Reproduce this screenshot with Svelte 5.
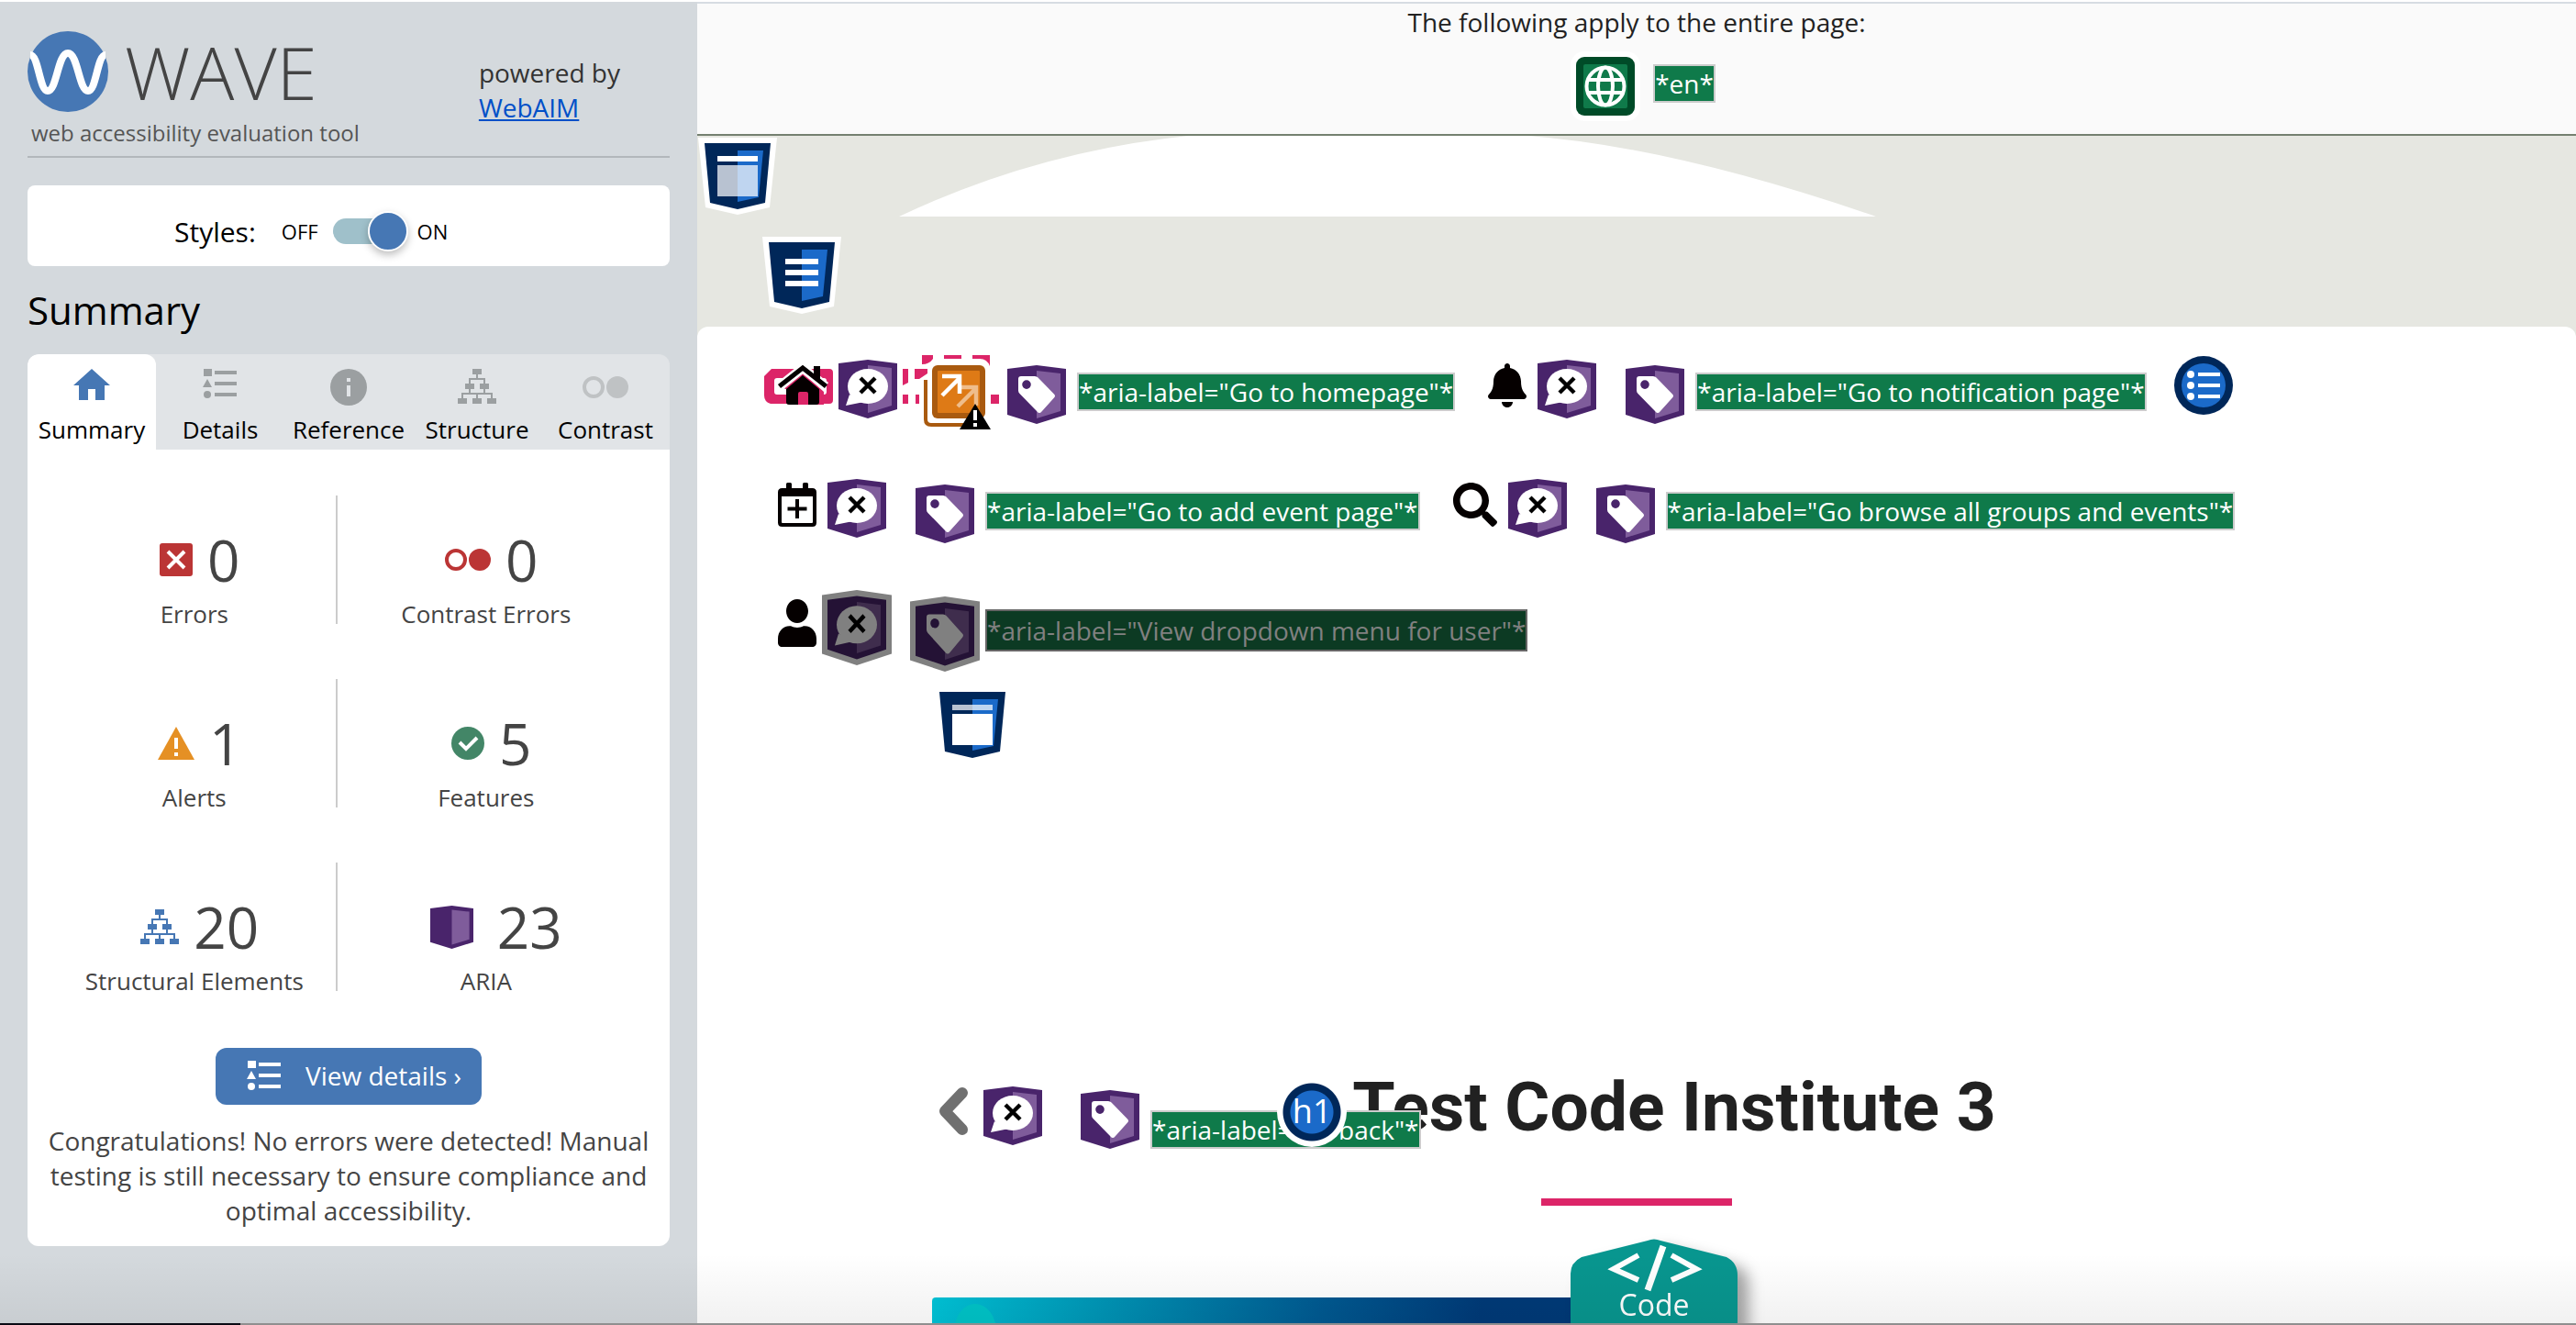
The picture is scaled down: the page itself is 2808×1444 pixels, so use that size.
<script>
  let stylesOn = $state(true);
  let active = $state('Summary');

  const tabs = ['Summary', 'Details', 'Reference', 'Structure', 'Contrast'];
  const stats = [
    { icon: 'error', count: 0, label: 'Errors' },
    { icon: 'low-contrast', count: 0, label: 'Contrast Errors' },
    { icon: 'alert', count: 1, label: 'Alerts' },
    { icon: 'feature', count: 5, label: 'Features' },
    { icon: 'elements', count: 20, label: 'Structural Elements' },
    { icon: 'roles', count: 23, label: 'ARIA' }
  ];
</script>

{#snippet structureIcon()}
  <svg width="42" height="38" viewBox="0 0 42 38" fill="currentColor" aria-hidden="true">
    <path d="M16 0h10v6H16zM8 16h10v6H8zM24 16h10v6H24zM0 32h10v6H0zM16 32h10v6H16zM32 32h10v6H32z" />
    <path d="M21 6v5M13 16v-5h16v5M13 22v5M29 22v5M5 32v-5h32v5M21 27v5" fill="none" stroke="currentColor" stroke-width="2" />
  </svg>
{/snippet}

{#snippet detailsIcon()}
  <svg width="38" height="32" viewBox="0 0 38 32" fill="currentColor" aria-hidden="true">
    <path d="M1 0h9v8H1zM13 2h24v4H13zM13 14h24v4H13zM13 26h24v4H13zM5 11l5 9H0z" />
    <circle cx="5" cy="28" r="4" />
  </svg>
{/snippet}

{#snippet contrastIcon()}
  <svg width="50" height="24" viewBox="0 0 50 24" fill="currentColor" aria-hidden="true">
    <circle cx="12" cy="12" r="10" fill="none" stroke="currentColor" stroke-width="4" />
    <circle cx="38" cy="12" r="12" />
  </svg>
{/snippet}

{#snippet ariaShape(kind)}
  <path d="M0 4 32 0 64 4V54L32 64 0 54Z" class="aria-dark" />
  <path d="M32 6 58 9V50L32 58Z" class="aria-light" />
  {#if kind === 'speech'}
    <ellipse cx="32" cy="29" rx="22" ry="19" class="aria-mark" />
    <path d="M12 38 8 50 28 46Z" class="aria-mark" />
    <path d="M24 20 40 36M40 20 24 36" stroke="#000" stroke-width="4.4" />
  {:else if kind === 'tag'}
    <path fill-rule="evenodd" class="aria-mark"
      d="M15 12h15q2 0 3.500 1.500L51 31.500q2 2 0 4L37.500 50.500q-2.500 3-5 0L13.500 31Q12 29.500 12 27.500V15q0-3 3-3ZM21 16.300a4.800 4.800 0 1 0 0 9.600 4.800 4.800 0 0 0 0-9.600Z" />
  {/if}
{/snippet}

{#snippet aria(kind, dim = false)}
  {#if dim}
    <svg class="aria {kind} dim" viewBox="-6 -6 76 76" preserveAspectRatio="none" aria-hidden="true">
      <path d="M-6-1 32-6 70-1V58.500L32 70-6 58.500Z" fill="#808080" />
      {@render ariaShape(kind)}
    </svg>
  {:else}
    <svg class="aria {kind}" viewBox="0 0 64 64" aria-hidden="true">
      {@render ariaShape(kind)}
    </svg>
  {/if}
{/snippet}

{#snippet region(kind)}
  <svg class="region {kind}" width="86" height="84" viewBox="-7 -6 86 84" aria-hidden="true">
    <path d="M-7-6H79L71 70 36 78 1 70Z" fill="#fff" />
    <path d="M0 0H72L66 65 36 72 6 65Z" fill="#002759" />
    <path d="M36 8H64L59 59 36 64Z" fill="#1b6ac9" />
    {#if kind === 'header'}
      <path d="M14 14h44v6H14z" fill="#fff" />
      <path d="M14 24h44v34H14z" fill="#fff" opacity=".72" />
    {:else if kind === 'nav'}
      <path d="M18 18h36v6H18zM18 30h36v6H18zM18 42h36v6H18z" fill="#fff" />
    {:else}
      <path d="M14 14h44v6H14z" fill="#fff" opacity=".72" />
      <path d="M14 24h44v34H14z" fill="#fff" />
    {/if}
  </svg>
{/snippet}

<div class="app">
  <div class="window">
    <aside class="sidebar">
      <header class="brand">
        <div class="logo">
          <div class="mark">
            <svg width="88" height="88" viewBox="0 0 88 88" aria-hidden="true">
              <circle cx="44" cy="44" r="44" fill="#4677b4" />
              <path d="M3 26C12 26 13 65 22 65C32 65 33 24 44 24C55 24 56 65 66 65C75 65 76 26 85 26" fill="none" stroke="#fff" stroke-width="8" />
            </svg>
            <span class="name">WAVE</span>
          </div>
          <p class="tagline">web accessibility evaluation tool</p>
        </div>
        <p class="powered">powered by<br /><a href="#webaim">WebAIM</a></p>
      </header>

      <div class="styles">
        <label class="styles-label" for="styles">Styles:</label>
        <span class="state">OFF</span>
        <input id="styles" class="switch" type="checkbox" role="switch" bind:checked={stylesOn} />
        <span class="state">ON</span>
      </div>

      <h2>Summary</h2>

      <div class="tabs" role="tablist">
        {#each tabs as tab}
          <button type="button" role="tab" class="tab {tab.toLowerCase()}" class:active={active === tab} aria-selected={active === tab} onclick={() => (active = tab)}>
            <span class="tab-icon">
              {#if tab === 'Summary'}
                <svg width="40" height="34" viewBox="0 0 40 34" fill="currentColor" aria-hidden="true">
                  <path d="M20 0 40 18H34V34H24V22H16V34H6V18H0Z" />
                </svg>
              {:else if tab === 'Details'}
                {@render detailsIcon()}
              {:else if tab === 'Reference'}
                <svg width="40" height="40" viewBox="0 0 40 40" aria-hidden="true">
                  <circle cx="20" cy="20" r="20" fill="currentColor" />
                  <path d="M18 10h4v4h-4zM18 18h4v12h-4z" fill="#e1e4e7" />
                </svg>
              {:else if tab === 'Structure'}
                {@render structureIcon()}
              {:else}
                {@render contrastIcon()}
              {/if}
            </span>
            {tab}
          </button>
        {/each}
      </div>

      <section class="panel">
        <ul class="stats">
          {#each stats as stat}
            <li>
              <span class="count {stat.icon}">
                {#if stat.icon === 'error'}
                  <svg width="36" height="36" viewBox="0 0 36 36" aria-hidden="true">
                    <rect width="36" height="36" rx="3" fill="#bb3535" />
                    <path d="M9 9 27 27M27 9 9 27" stroke="#fff" stroke-width="4" />
                  </svg>
                {:else if stat.icon === 'low-contrast'}
                  {@render contrastIcon()}
                {:else if stat.icon === 'alert'}
                  <svg width="40" height="36" viewBox="0 0 40 36" aria-hidden="true">
                    <path d="M20 0 40 36H0Z" fill="#e59024" />
                    <path d="M18 12h4v12h-4zM18 28h4v4h-4z" fill="#fff" />
                  </svg>
                {:else if stat.icon === 'feature'}
                  <svg width="36" height="36" viewBox="0 0 36 36" aria-hidden="true">
                    <circle cx="18" cy="18" r="18" fill="#438667" />
                    <path d="M9 17 16 24 28 12" fill="none" stroke="#fff" stroke-width="4" />
                  </svg>
                {:else if stat.icon === 'elements'}
                  {@render structureIcon()}
                {:else}
                  <svg width="47" height="47" viewBox="0 0 64 64" aria-hidden="true">
                    {@render ariaShape('plain')}
                  </svg>
                {/if}
                {stat.count}
              </span>
              <span class="stat-label">{stat.label}</span>
            </li>
          {/each}
        </ul>
        <button type="button" class="view">{@render detailsIcon()} View details ›</button>
        <p class="note">Congratulations! No errors were detected! Manual testing is still necessary to ensure compliance and optimal accessibility.</p>
      </section>
    </aside>

    <main>
      <div class="page-info">
        <p>The following apply to the entire page:</p>
        <div class="lang">
          <svg width="76" height="76" viewBox="0 0 76 76" aria-hidden="true">
            <rect width="76" height="76" rx="15" fill="#fff" />
            <rect x="6" y="6" width="64" height="64" rx="9" fill="#004b28" />
            <rect x="14" y="14" width="48" height="48" rx="2" fill="#0f7a4a" />
            <g fill="none" stroke="#fff" stroke-width="4">
              <circle cx="38" cy="38" r="20.500" />
              <ellipse cx="38" cy="38" rx="8" ry="20.500" />
              <path d="M18 31h40M18 45h40" />
            </g>
          </svg>
          <span class="tag-text">*en*</span>
        </div>
      </div>

      <div class="band">
        <svg class="arc" viewBox="0 0 1066 88" preserveAspectRatio="none" aria-hidden="true">
          <path d="M0 88Q150 17 316 0H686Q845 12 1066 88Z" fill="#fff" />
        </svg>
        {@render region('header')}
        {@render region('nav')}
      </div>

      <div class="page">
        <nav>
          <div class="row first">
            <a class="item" href="#home">
              <span class="home">
                <svg width="76" height="84" viewBox="0 0 76 84" aria-hidden="true">
                  <path fill-rule="evenodd" fill="#dc2568" d="M9 16H72q4 0 4 4V50q0 4-4 4H8q-7-2-7-9V24ZM15 26q-3 0-3 3V41q0 3 3 3H66q3 0 3-3V29q0-3-3-3Z" />
                  <path d="M43 20 66 41V55H29V40L20 36Z" fill="#dc2568" />
                  <path d="M18 35 43 15 68 35" fill="none" stroke="#fff" stroke-width="10" />
                  <path d="M55 13h7V30L55 24Z" fill="#050000" />
                  <path d="M17.500 35 43 15 68.500 35" fill="none" stroke="#050000" stroke-width="5" />
                  <path d="M25 38 43 23 61 38V52q0 3-3 3H49V43q0-2-2-2H40q-2 0-2 2V55H28q-3 0-3-3Z" fill="#050000" />
                </svg>
                {@render aria('speech')}
                <svg class="redundant" width="102" height="84" viewBox="0 0 102 84" aria-hidden="true">
                  <path fill="#dc2568" d="M0 16h6V31L0 34ZM13 16h14v5l-9 6h-5ZM0 44h6V54H0ZM14 44h4V54H14ZM21 1H33V5q-4 6-12 6ZM45 1H64V5H45ZM76 1H95V13Q92 5 84 5H76ZM96 44h9V54H96Z" />
                  <path d="M25 28V71q0 6 6 6H86" fill="none" stroke="#a95a0f" stroke-width="4" />
                  <rect x="32" y="12" width="58" height="58" rx="6" fill="#a95a0f" />
                  <rect x="38" y="18" width="46" height="46" rx="1" fill="#de7a16" />
                  <g fill="none" stroke="#fff" stroke-width="4.500">
                    <path d="M43 45 61 27M43 24H62V43" />
                    <path d="M60 57 79 38M61 36H80V56" opacity=".5" />
                  </g>
                  <path d="M79 54 96 82H62Z" fill="#000" />
                  <path d="M77 61h4V72h-4zM77 75h4v4h-4z" fill="#fff" />
                </svg>
              </span>
              {@render aria('tag')}
              <span class="tag-text">*aria-label="Go to homepage"*</span>
            </a>
            <a class="item" href="#notifications">
              <svg class="glyph" width="42" height="48" viewBox="0 0 448 512" aria-hidden="true">
                <path d="M224 512c35.320 0 63.970-28.650 63.970-64H160.030c0 35.350 28.650 64 63.970 64zm215.390-149.710c-19.320-20.760-55.470-51.990-55.470-154.290 0-77.700-54.480-139.900-127.940-155.160V32c0-17.670-14.320-32-31.980-32s-31.980 14.330-31.980 32v20.840C118.560 68.100 64.080 130.300 64.080 208c0 102.300-36.150 133.530-55.470 154.290-6 6.450-8.660 14.160-8.610 21.710.11 16.400 12.980 32 32.100 32h383.800c19.120 0 32-15.600 32.100-32 .05-7.550-2.610-15.270-8.610-21.710z" />
              </svg>
              {@render aria('speech')}
              {@render aria('tag')}
              <span class="tag-text">*aria-label="Go to notification page"*</span>
            </a>
            <svg class="list-badge" width="64" height="64" viewBox="0 0 64 64" aria-hidden="true">
              <circle cx="32" cy="32" r="32" fill="#002759" />
              <circle cx="32" cy="32" r="24" fill="#1b6ac9" />
              <g fill="#fff">
                <circle cx="18" cy="20" r="4" /><circle cx="18" cy="32" r="4" /><circle cx="18" cy="44" r="4" />
                <path d="M26 18h24v4H26zM26 30h24v4H26zM26 42h24v4H26z" />
              </g>
            </svg>
          </div>

          <div class="row">
            <a class="item" href="#add-event">
              <svg class="glyph" width="42" height="48" viewBox="0 0 42 48" aria-hidden="true">
                <path fill-rule="evenodd" d="M9 6V1.500Q9 0 10.500 0h3Q15 0 15 1.500V6H27V1.500Q27 0 28.500 0h3Q33 0 33 1.500V6h4.500Q42 6 42 10.500v33Q42 48 37.500 48h-33Q0 48 0 43.500v-33Q0 6 4.500 6ZM4 15V43q0 1 1 1H37q1 0 1-1V15Z" />
                <path d="M21 18V39M10.500 28.500H31.500" stroke="#050000" stroke-width="4" />
              </svg>
              {@render aria('speech')}
              {@render aria('tag')}
              <span class="tag-text">*aria-label="Go to add event page"*</span>
            </a>
            <a class="item" href="#browse">
              <svg class="glyph" width="48" height="48" viewBox="0 0 512 512" aria-hidden="true">
                <path d="M505 442.700L405.300 343c-4.500-4.500-10.600-7-17-7H372c27.600-35.300 44-79.700 44-128C416 93.100 322.900 0 208 0S0 93.100 0 208s93.100 208 208 208c48.300 0 92.700-16.400 128-44v16.300c0 6.400 2.500 12.500 7 17l99.700 99.700c9.400 9.400 24.600 9.400 33.900 0l28.300-28.300c9.400-9.400 9.400-24.600.1-34zM208 336c-70.700 0-128-57.200-128-128 0-70.700 57.200-128 128-128 70.700 0 128 57.200 128 128 0 70.700-57.200 128-128 128z" />
              </svg>
              {@render aria('speech')}
              {@render aria('tag')}
              <span class="tag-text">*aria-label="Go browse all groups and events"*</span>
            </a>
          </div>

          <div class="row">
            <button type="button" class="item user">
              <svg class="glyph person" width="42" height="52" viewBox="0 0 448 512" preserveAspectRatio="none" aria-hidden="true">
                <path d="M224 256c70.700 0 128-57.300 128-128S294.700 0 224 0 96 57.300 96 128s57.300 128 128 128zm89.600 32h-16.700c-22.200 10.200-46.900 16-72.900 16s-50.600-5.800-72.900-16h-16.700C60.200 288 0 348.200 0 422.400V464c0 26.500 21.500 48 48 48h352c26.500 0 48-21.500 48-48v-41.600c0-74.200-60.200-134.400-134.400-134.400z" />
              </svg>
              {@render aria('speech', true)}
              {@render aria('tag', true)}
              <span class="tag-text dim-text">*aria-label="View dropdown menu for user"*</span>
            </button>
          </div>
        </nav>

        {@render region('main')}

        <div class="title">
          <a class="item back" href="#back">
            <svg width="34" height="54" viewBox="0 0 34 54" aria-hidden="true">
              <path d="M27 7 8 27 27 47" fill="none" stroke="#707070" stroke-width="12" stroke-linecap="round" stroke-linejoin="round" />
            </svg>
            {@render aria('speech')}
            {@render aria('tag')}
            <span class="tag-text">*aria-label="go back"*</span>
          </a>
          <h1><span class="level">h1</span>Test Code Institute 3</h1>
        </div>
        <hr />
        <div class="hero">
          <div class="banner"><span class="dot"></span></div>
          <div class="badge">
            <svg viewBox="0 0 182 120" width="182" height="120" aria-hidden="true">
              <path d="M0 120V38Q0 26 12 20L84 2Q91-1 98 2L170 20Q182 26 182 40V120Z" fill="#08968f" />
              <path d="M74 18 47 33 74 45M110 18 137 33 110 45" fill="none" stroke="#fff" stroke-width="6" />
              <path d="M101 8 84 56" stroke="#fff" stroke-width="7" />
            </svg>
            <span>Code</span>
          </div>
        </div>
      </div>
    </main>
    <div class="haze"></div>
  </div>
  <div class="strip"><span></span></div>
</div>

<style>
  :global(body) {
    margin: 0;
    background: #fff;
  }

  .app {
    display: flex;
    flex-direction: column;
    height: 100vh;
    overflow: hidden;
    box-sizing: border-box;
    padding-top: 2px;
    font-family: 'Open Sans', 'Noto Sans', sans-serif;
    font-size: 28px;
    color: #444;
  }

  p, h1, h2, ul, hr { margin: 0; padding: 0; }
  svg { display: block; flex: none; }
  button { font: inherit; color: inherit; border: 0; background: none; padding: 0; cursor: pointer; }

  .window {
    position: relative;
    display: flex;
    flex: 1;
    min-height: 0;
    overflow: hidden;
  }

  /* Sidebar */
  .sidebar {
    flex: 0 0 760px;
    box-sizing: border-box;
    padding: 32px 30px 0;
    background: #d4d9dd;
  }

  .brand {
    display: flex;
    justify-content: space-between;
    border-bottom: 2px solid #b2b7bb;
    height: 136px;
  }
  .mark { display: flex; align-items: center; gap: 18px; height: 88px; }
  .name { font-size: 80px; font-weight: 300; line-height: 88px; color: #444; }
  .tagline { padding-left: 4px; font-size: 24px; line-height: 46px; color: #555; }
  .powered { padding: 26px 54px 0 0; line-height: 38px; color: #333; }
  .powered a { color: #0050c8; }

  .styles {
    display: flex;
    align-items: center;
    gap: 12px;
    height: 88px;
    margin-top: 30px;
    padding: 12px 0 0 160px;
    box-sizing: border-box;
    border-radius: 8px;
    background: #fff;
    color: #000;
  }
  .styles-label { font-size: 30px; padding-right: 16px; }
  .state { font-size: 22px; }
  .switch {
    appearance: none;
    position: relative;
    width: 80px;
    height: 28px;
    margin: 0 0 0 4px;
    border-radius: 14px;
    background: #9fc0ca;
    cursor: pointer;
  }
  .switch::before {
    content: '';
    position: absolute;
    top: -8px;
    left: 0;
    width: 40px;
    height: 40px;
    border: 2px solid #fff;
    border-radius: 50%;
    background: #4677b4;
    box-shadow: 0 4px 8px rgba(0, 0, 0, 0.25);
  }
  .switch:checked::before { left: 38px; }

  h2 {
    margin: 20px 0;
    font-size: 42px;
    font-weight: 400;
    line-height: 56px;
    color: #000;
  }

  .tabs {
    display: grid;
    grid-template-columns: repeat(5, 1fr);
    border-radius: 12px 12px 0 0;
    overflow: hidden;
    background: #e1e4e7;
  }
  .tab {
    height: 104px;
    padding: 16px 0 0;
    border-radius: 12px 12px 0 0;
    font-size: 26px;
    line-height: 36px;
    color: #000;
    display: flex;
    flex-direction: column;
    align-items: center;
    gap: 8px;
  }
  .tab.active { background: #fff; }
  .tab-icon { height: 40px; color: #9b9fa1; }
  .active .tab-icon { color: #4677b4; }
  .contrast .tab-icon { color: #bfc2c4; padding-top: 8px; box-sizing: border-box; }

  .panel {
    display: flex;
    flex-direction: column;
    align-items: center;
    padding: 50px 20px 20px;
    border-radius: 0 0 12px 12px;
    background: #fff;
  }
  .stats {
    align-self: stretch;
    display: grid;
    grid-template-columns: 49fr 51fr;
    gap: 53px 0;
    padding: 0 18px 0 6px;
    list-style: none;
  }
  .stats li {
    position: relative;
    display: flex;
    flex-direction: column;
    align-items: center;
    padding-top: 28px;
  }
  .stats li:nth-child(odd)::after {
    content: '';
    position: absolute;
    top: 0;
    right: 0;
    width: 2px;
    height: 140px;
    background: #ccc;
  }
  .count {
    display: flex;
    align-items: center;
    gap: 16px;
    padding-left: 12px;
    font-size: 62px;
    line-height: 84px;
  }
  .low-contrast svg { color: #bb3535; }
  .count.low-contrast :global(svg) { color: #bb3535; }
  .count.elements :global(svg) { color: #4677b4; }
  .count.roles { gap: 26px; padding-left: 22px; }
  .stat-label { font-size: 26px; line-height: 35px; }
  .view {
    display: flex;
    align-items: center;
    gap: 26px;
    height: 62px;
    margin-top: 55px;
    padding: 0 22px 2px 34px;
    box-sizing: border-box;
    border-radius: 12px;
    background: #4677b4;
    color: #fff;
  }
  .note { margin-top: 20px; line-height: 38px; text-align: center; }

  .aria-dark { fill: #49246b; }
  .aria-light { fill: #7f5c9b; }
  .aria-mark { fill: #fff; }
  .dim .aria-dark { fill: #241235; }
  .dim .aria-light { fill: #3f2d4d; }
  .dim .aria-mark { fill: #808080; }

  /* Evaluated page */
  main {
    flex: 1;
    min-width: 0;
    display: flex;
    flex-direction: column;
    color: #222;
  }
  .page-info {
    flex: none;
    border-top: 2px solid #d6dce2;
    border-bottom: 2px solid #748070;
    background: #fafafa;
    height: 142px;
    text-align: center;
    line-height: 40px;
  }
  .lang { display: flex; justify-content: center; align-items: flex-start; gap: 14px; padding: 12px 0 0 14px; }
  .lang .tag-text { margin-top: 14px; }

  .tag-text {
    border: 2px solid #ccc;
    background: #0f7a4a;
    color: #fff;
    line-height: 38px;
    white-space: nowrap;
  }
  .dim-text {
    border-color: #666;
    background: #0c3a23;
    color: #808080;
    line-height: 42px;
  }

  .band {
    flex: none;
    position: relative;
    height: 208px;
    padding: 2px 1px 0;
    box-sizing: border-box;
    background: #e6e7e1;
  }
  .arc { position: absolute; top: 0; left: 220px; width: 52%; height: 88px; }
  .region { position: relative; }
  .region.nav { margin: 24px 0 0 70px; }
  .region.main { margin: 18px 0 0 257px; }

  .page {
    flex: 1;
    border-radius: 12px;
    background: #fff;
    box-shadow: 0 0 0 12px #e6e7e1;
    clip-path: inset(0);
    padding-top: 30px;
  }
  nav { display: flex; flex-direction: column; gap: 46px; }
  .row { display: flex; gap: 36px; height: 84px; padding-left: 88px; }
  .row.first { padding-left: 72px; }
  .item { display: flex; align-items: flex-start; gap: 12px; color: inherit; text-decoration: none; text-align: left; }
  .glyph { margin-top: 10px; fill: #050000; }
  .aria { width: 64px; height: 64px; }
  .aria.speech { margin: 6px 20px 0 0; }
  .aria.tag { margin-top: 12px; }
  .item .tag-text { margin-top: 20px; }
  .home { display: flex; gap: 6px; }
  .home .aria.speech { margin-right: 0; }
  .redundant { overflow: visible; }
  .list-badge { margin: 2px 0 0 -6px; }

  .user { gap: 6px; }
  .user .person { margin-top: 7px; }
  .user .aria { width: 76px; height: 82px; }
  .user .aria.speech { margin: -3px 14px 0 0; }
  .user .aria.tag { margin-top: 4px; }
  .item .dim-text { margin-top: 18px; }

  .title { display: grid; align-items: start; margin-top: 330px; }
  .title > * { grid-area: 1 / 1; }
  .back { position: relative; z-index: 1; justify-self: start; gap: 16px; padding: 22px 0 0 262px; }
  .back .aria.speech { margin: 0 26px 0 0; }
  .back .aria.tag { margin-top: 4px; }
  .back .tag-text { margin: 26px 0 0 -4px; }
  h1 {
    display: flex;
    justify-self: center;
    align-items: flex-start;
    gap: 6px;
    font-family: Roboto, sans-serif;
    font-size: 75px;
    font-weight: 700;
    line-height: 88px;
    color: #212121;
  }
  .level {
    position: relative;
    z-index: 2;
    margin-top: 12px;
    box-sizing: border-box;
    width: 76px;
    height: 76px;
    padding: 6px;
    border: 8px solid #002759;
    border-width: 0;
    border-radius: 50%;
    background: radial-gradient(circle, #1b6ac9 23px, #002759 24px, #002759 31px, #fff 32px);
    color: #fff;
    font-family: 'Open Sans', sans-serif;
    font-size: 36px;
    font-weight: 400;
    line-height: 62px;
    text-align: center;
  }
  hr { width: 208px; height: 8px; margin: 54px auto 36px; border: 0; background: #dc2568; }

  .hero { display: flex; align-items: flex-start; padding-left: 256px; }
  .banner {
    width: calc(50% + 100px);
    max-width: 696px;
    height: 60px;
    margin-top: 64px;
    border-radius: 4px 0 0 0;
    overflow: hidden;
    background: linear-gradient(100deg, #00c4d8, #0098b8 25%, #005a92 60%, #003a78 85%);
  }
  .dot { display: block; width: 46px; height: 60px; margin: 7px 0 0 24px; border-radius: 50%; background: #00c4c8; }
  .badge { display: grid; justify-items: center; height: 92px; filter: drop-shadow(12px 10px 8px rgba(0, 0, 0, 0.35)); }
  .badge > * { grid-area: 1 / 1; }
  .badge span { margin-top: 52px; font-size: 32px; line-height: 40px; color: #fff; }

  .haze {
    position: absolute;
    inset: auto 0 0 0;
    height: 76px;
    background: linear-gradient(transparent, rgba(0, 0, 0, 0.055));
    pointer-events: none;
    z-index: 3;
  }
  .strip { flex: none; height: 2px; background: #8f8f8f; }
  .strip span { display: block; width: 262px; height: 2px; background: #0a0a14; }
</style>
